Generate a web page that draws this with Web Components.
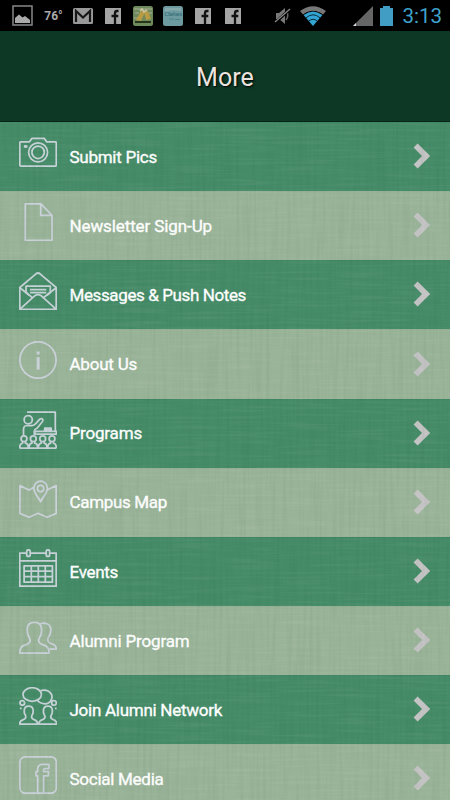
<!DOCTYPE html>
<html lang="en">
<head>
<meta charset="utf-8">
<title>More</title>
<style>
  html, body { margin: 0; height: 100%; background: #000; }
  body { font-family: Roboto, "Liberation Sans", sans-serif; overflow: hidden; }
</style>
</head>
<body>
<more-screen>
  <status-bar slot="status" temp="76°" time="3:13"></status-bar>
  <title-bar slot="title">More</title-bar>
  <menu-row icon="camera" fit="87.5">Submit Pics</menu-row>
  <menu-row icon="page" fit="142.5" light>Newsletter Sign-Up</menu-row>
  <menu-row icon="envelope" fit="176.5">Messages &amp; Push Notes</menu-row>
  <menu-row icon="info" fit="67.5" light>About Us</menu-row>
  <menu-row icon="lecture" fit="72.5">Programs</menu-row>
  <menu-row icon="map" fit="97.5" light>Campus Map</menu-row>
  <menu-row icon="calendar" fit="48.5">Events</menu-row>
  <menu-row icon="people" fit="120" light>Alumni Program</menu-row>
  <menu-row icon="network" fit="152.5">Join Alumni Network</menu-row>
  <menu-row icon="facebook" fit="94" light>Social Media</menu-row>
</more-screen>

<script>
(function () {
  // line icons, all on a 38x38 grid
  var ICONS = {
    camera:
      '<path d="M1.8 7.9H10.3L13 4.3H25.2L27.8 7.9H36.3Q37.3 7.9 37.3 8.9V31Q37.3 32 36.3 32H1.8Q.8 32 .8 31V8.9Q.8 7.9 1.8 7.9Z"/>' +
      '<circle cx="19.1" cy="18.3" r="9.5"/><circle cx="19.1" cy="18.3" r="6.2"/>' +
      '<ellipse cx="6.7" cy="12.4" rx="1.2" ry=".6"/>',
    page: '<path d="M6.3 .9H22L33 12.4V37.3H6.3ZM21.7 1V12.3H33"/>',
    envelope:
      '<path d="M.8 37.3V15.5L17 1.8Q19 .2 21 1.8L37.2 15.5V37.3ZM.8 15.8L13 25.3M37.2 15.8L25 25.3M1 37.1L16.2 23.4Q19 21.9 21.8 23.4L37 37.1"/>' +
      '<path d="M7 20.5V14.2H31.3V20.5L28 23.2M7 20.5L10.3 23.2M11 17.7H27.3M11 20.6H27.3"/>',
    info: '<circle cx="19" cy="19" r="18.1"/><path stroke-width="3" d="M19.2 10.6V13.4M19.2 16V28.6"/>',
    lecture:
      '<path d="M8 1.2H36.3V19.8M16 20.3H37.4V23H16Z"/><path fill="currentColor" d="M25.7 17H32.2V20H25.7Z"/>' +
      '<circle cx="9.2" cy="8.8" r="4.1"/>' +
      '<path d="M4.5 25V18.3Q4.5 14.7 8 14.5H13.4Q15.3 14.4 16.5 12.8L20.8 8.2Q22.6 7 23.7 8.4Q24.3 9.4 23.3 10.8L18.3 17Q15.3 18.5 15.3 20V24"/>' +
      [5, 14.3, 23.7, 33].map(function (x) {
        return '<circle cx="' + x + '" cy="27.8" r="2.9"/><path d="M' + (x - 4.2) + ' 37V35.4Q' + (x - 4) + ' 32.8 ' + (x - 1.4) + ' 32.2V30.4M' +
          (x + 4.2) + ' 37V35.4Q' + (x + 4) + ' 32.8 ' + (x + 1.4) + ' 32.2V30.4"/>';
      }).join('') + '<path d="M.5 37.2H37.5"/>',
    map:
      '<path d="M15 7.3L10 10L.9 5.6V33.4L10 37.2L19 33.2L28.2 37.2L37.2 33.4V5.6L28.4 9.8"/>' +
      '<path d="M21.6 21.8C20 17.6 14.9 13.7 14.9 8.2A6.7 7.2 0 0 1 28.3 8.2C28.3 13.7 23.2 17.6 21.6 21.8Z"/><circle cx="21.6" cy="8.6" r="3.2"/>',
    calendar:
      '<path d="M7.6 4H.8V37.2H37.2V4H31M11.4 4H27M.8 11.9H37.2"/>' +
      '<rect x="7.7" y=".8" width="3.5" height="6.6" rx="1.7"/><rect x="27.2" y=".8" width="3.5" height="6.6" rx="1.7"/>' +
      '<path d="M5.1 16.8H33.4V33.2H5.1ZM12.3 16.8V33.2M19.3 16.8V33.2M26.3 16.8V33.2M5.1 22.2H33.4M5.1 27.7H33.4"/>',
    people:
      '<path d="M.8 35Q.6 29.3 5 27.4Q11.2 25.6 11.2 22.5Q11.2 20.4 9.5 18.2Q8 15.8 8.3 11Q8.4 4.4 15.4 4.4Q22.4 4.4 22.5 11Q22.8 15.8 21.3 18.2Q19.6 20.4 19.6 22.5Q19.6 25.6 25.8 27.4Q30.2 29.3 30 35Z"/>' +
      '<path d="M21 5.8Q24.7 4.4 28 5.8Q31.8 7.4 31.8 12Q31.7 16 29.8 18.6Q27.8 21.4 29.5 24Q30.4 25 34 26.3Q37.2 27.5 37.2 31H30.2"/>',
    network:
      '<ellipse cx="13.2" cy="7.5" rx="9.2" ry="6.8"/><path d="M21.3 3.8Q25.7 2.1 29.5 4.2Q33.3 6.7 33 10.3Q32.4 15.7 27 16.8Q21 17.1 18.2 13.1"/>' +
      '<circle cx="3.3" cy="15.9" r="2.3"/><circle cx="35" cy="15.9" r="2.3"/>' +
      '<path d="M.9 21.3H2.7M35.9 21.3H37.7"/>' +
      [0, 19.2].map(function (x) {
        return '<path transform="translate(' + x + ')" d="M.6 37Q.8 33.6 4.3 32.6Q6.8 31.7 6.8 29.8Q6.8 28.7 5.8 27.3Q5.2 26 5.2 23.7Q5.4 19.2 9.7 19.2Q14 19.2 14.2 23.7Q14.2 26 13.6 27.3Q12.6 28.7 12.6 29.8Q12.6 31.7 15.1 32.6Q18.4 33.6 18.7 37Z"/>';
      }).join(''),
    facebook:
      '<rect x=".9" y=".9" width="36.4" height="36.3" rx="5.2"/>' +
      '<path d="M18.6 37V19.9H17V15.6H18.6V13Q18.9 8.6 23.2 8.4H29.9V12.6H26.3Q24.6 12.6 24.6 14V15.6H29.7L29.2 19.9H24.6V37"/>'
  };

  function define(name, html, setup) {
    if (customElements.get(name)) return;
    customElements.define(name, class extends HTMLElement {
      connectedCallback() {
        if (this.shadowRoot) return;
        var root = this.attachShadow({ mode: 'open' });
        root.innerHTML = html;
        if (setup) setup(this, root);
      }
    });
  }

  define('more-screen',
    '<style>' +
    ':host{display:flex;flex-direction:column;height:800px;width:450px;overflow:hidden}' +
    '.list{flex:1;display:grid;overflow:hidden;min-height:0}' +
    '.rows,.weave{grid-area:1/1}' +
    '.rows{display:flex;flex-direction:column}' +
    '.weave{width:450px;height:692px;pointer-events:none}' +
    '</style>' +
    '<slot name="status"></slot><slot name="title"></slot>' +
    '<div class="list"><div class="rows"><slot></slot></div>' +
    // linen threads: one noise stretched across, one stretched down
    '<svg class="weave" viewBox="0 0 450 692">' +
    '<filter id="h" x="0" y="0" width="100%" height="100%" color-interpolation-filters="sRGB"><feTurbulence type="fractalNoise" baseFrequency=".018 .4" numOctaves="2" seed="4"/>' +
    '<feColorMatrix values="0 0 0 0 1  0 0 0 0 1  0 0 0 0 1  1.2 0 0 0 -.5"/></filter>' +
    '<filter id="v" x="0" y="0" width="100%" height="100%" color-interpolation-filters="sRGB"><feTurbulence type="fractalNoise" baseFrequency=".3 .014" numOctaves="2" seed="9"/>' +
    '<feColorMatrix values="0 0 0 0 0  0 0 0 0 .2  0 0 0 0 .1  1.2 0 0 0 -.5"/></filter>' +
    '<rect width="450" height="692" filter="url(#h)" opacity=".1"/><rect width="450" height="692" filter="url(#v)" opacity=".09"/>' +
    '</svg></div>');

  define('title-bar',
    '<style>' +
    ':host{display:flex;flex:none;align-items:center;justify-content:center;box-sizing:border-box;height:91px;padding-top:2px;' +
    'background:#0c3825;border-bottom:1px solid #062517;color:#ebe3df;font-size:25px;letter-spacing:.1px;text-shadow:1px 1px 2px #000}' +
    '</style><span><slot></slot></span>');

  define('menu-row',
    '<style>' +
    ':host{display:flex;flex:none;box-sizing:border-box;height:69.17px;padding:0 19px;background:#458b67;' +
    'color:#fff;--line:#c6d2d7;border-top:1px solid #408663}' +
    ':host([light]){background:#99b398;border-top-color:#94b095;--line:#cad1d9}' +
    '.icon{flex:none;width:38px;height:38px;margin-top:11px;color:var(--line)}' +
    '.label{flex:1;padding:0 0 1px 12.5px;align-self:center;font-size:17px;line-height:20px;white-space:nowrap;-webkit-text-stroke:.35px #fff}' +
    '.go{flex:none;align-self:center;width:18px;height:26px;margin-bottom:2px}' +
    '</style>' +
    '<svg class="icon" viewBox="0 0 38 38" fill="none" stroke="currentColor" stroke-width="1.75" stroke-linejoin="round"></svg>' +
    '<span class="label"><span class="text"><slot></slot></span></span>' +
    '<svg class="go" viewBox="0 0 18 26"><path fill="#c4c3c4" d="M4.6 .4L17.2 13L4.6 25.6L.6 21.6L9 13L.6 4.4Z"/></svg>',
    function (host, root) {
      root.querySelector('.icon').innerHTML = ICONS[host.getAttribute('icon')] || '';
      // track the label in or out to the width it asks for
      var text = root.querySelector('.text');
      var gap = parseFloat(host.getAttribute('fit')) - text.getBoundingClientRect().width;
      if (gap) text.style.letterSpacing = gap / host.textContent.length + 'px';
    });

  define('status-bar',
    '<style>' +
    ':host{display:flex;flex:none;justify-content:space-between;align-items:center;height:31px;box-sizing:border-box;' +
    'padding:0 8px 0 12px;background:#000}' +
    '.side{display:flex;align-items:center}' +
    'svg{display:block;flex:none}' +
    '.temp{width:29px;text-align:center;color:#aaa;font-size:12px;font-weight:700;white-space:nowrap}' +
    '.time{color:#3fa4cd;font-size:20.5px;line-height:30px;padding-top:1px}' +
    '</style>' +
    '<div class="side">' +
    '<svg width="21" height="21"><rect x="1" y="1" width="19" height="19" fill="none" stroke="#888" stroke-width="1.5"/><path fill="#aaa" d="M3 18V13L7 9.5L10.5 12.5L13 11L18 15V18Z"/></svg>' +
    '<span class="temp" style="margin-left:6px"></span>' +
    '<svg style="margin-left:5px" width="20" height="16"><rect width="20" height="16" rx="1.5" fill="#999"/><path fill="none" stroke="#171717" stroke-width="2.2" d="M3 14V3L10 9.5L17 3V14"/></svg>' +
    '<svg class="fb" style="margin-left:12px" width="16" height="16"></svg>' +
    '<svg style="margin-left:12px" width="20" height="20"><rect width="20" height="20" rx="2.5" fill="#6e8a5c"/><path d="M1 3H19M2 7H6M14 7H19M1 12H5" stroke="#8c9c78" stroke-width="2"/>' +
    '<path fill="#b99b43" d="M8 5L12 6L8 15L3 14ZM11 6L15 5L18 13L13 14Z"/><path d="M7 5L9 3L11 6L14 4" fill="none" stroke="#ccc6a0" stroke-width="1.6"/><path d="M2 16H18" stroke="#151f0a" stroke-width="1.6"/></svg>' +
    '<svg style="margin-left:10px" width="20" height="20"><rect width="20" height="20" rx="2.5" fill="#6c9a9f"/><path fill="#86aaac" d="M2 2H18V5Q8 3 2 6Z"/>' +
    '<text x="1.5" y="10" font-size="5.5" font-family="Liberation Serif, serif" fill="#205d6c">Chelsea</text><path d="M6 13H11M12 13.5H17" stroke="#4b838c"/></svg>' +
    '<svg class="fb" style="margin-left:12px" width="16" height="16"></svg>' +
    '<svg class="fb" style="margin-left:14px" width="16" height="16"></svg>' +
    '</div>' +
    '<div class="side">' +
    '<svg width="17" height="18"><path fill="#777" d="M2 6H5L11 1V17L5 12H2Z"/><path d="M13 5Q15 9 12 13" fill="none" stroke="#666" stroke-width="1.5"/><path d="M1 16L16 2" stroke="#000" stroke-width="3"/><path d="M1 15L16 2" stroke="#888" stroke-width="1.3"/></svg>' +
    '<svg style="margin-left:9px" width="26" height="20" viewBox="0 0 26 20"><path fill="#777" d="M0 5Q13 -4.5 26 5L23 8.5Q13 1 3 8.5Z"/><path fill="#34a4d3" d="M3.6 9Q13 1.8 22.4 9L13 20Z"/>' +
    '<path fill="none" stroke="#062c3c" stroke-width="1" d="M6 11.8Q13 5.8 20 11.8M8.8 15Q13 11.5 17.2 15"/></svg>' +
    '<svg style="margin-left:27px" width="21" height="20"><path fill="#666" d="M0 20L20 0V20Z"/><path fill="#ddd" d="M0 20L3 17V20Z"/></svg>' +
    '<svg style="margin-left:6px" width="13" height="20"><path fill="#429dc4" d="M3 0H10V2H13V20H0V2H3Z"/></svg>' +
    '<span class="time" style="margin-left:9px"></span>' +
    '</div>',
    function (host, root) {
      root.querySelector('.temp').textContent = host.getAttribute('temp');
      root.querySelector('.time').textContent = host.getAttribute('time');
      root.querySelectorAll('.fb').forEach(function (svg) {
        svg.innerHTML = '<rect width="16" height="16" fill="#a5a5a5"/><path fill="none" stroke="#111" stroke-width="2.3" d="M13.5 3H12Q10 3 10 5.3V16M6.5 8H13.3"/>';
      });
    });
})();
</script>
</body>
</html>
